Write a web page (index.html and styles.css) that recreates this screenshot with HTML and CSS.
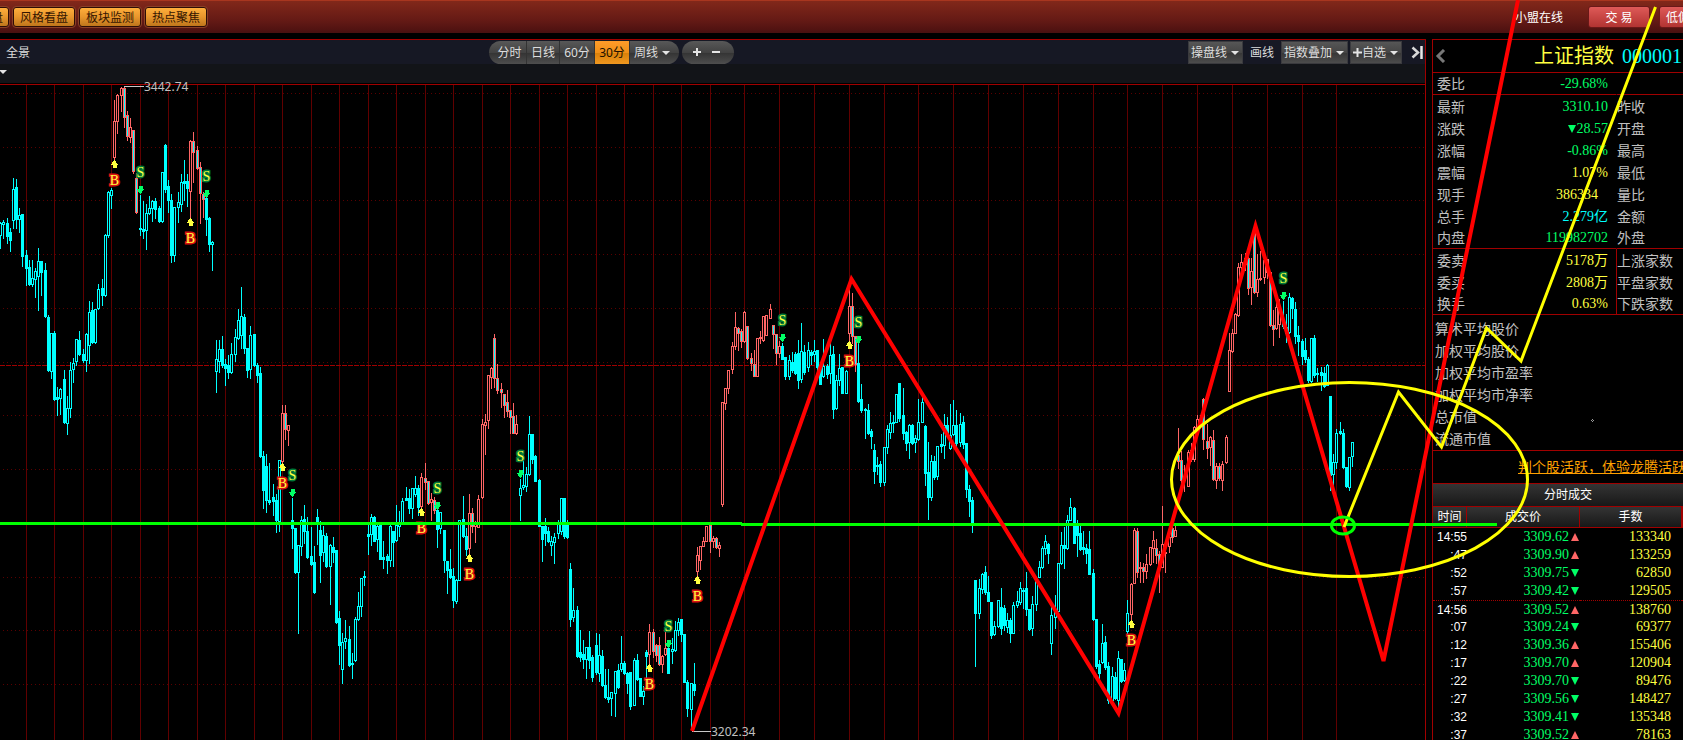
FILE: index.html
```html
<!DOCTYPE html>
<html lang="zh-CN">
<head>
<meta charset="utf-8">
<title>上证指数 000001</title>
<link rel="stylesheet" href="styles.css">
</head>
<body>
<header class="topbar">
  <nav class="topnav">
    <button class="gold gold-cut">盘</button>
    <button class="gold">风格看盘</button>
    <button class="gold">板块监测</button>
    <button class="gold">热点聚焦</button>
  </nav>
  <div class="topright">
    <a class="online" href="#">小盟在线</a>
    <button class="trade">交 易</button>
    <button class="trade">低佣开户</button>
  </div>
</header>
<main class="workspace">
  <section class="chart-panel">
    <div class="toolbar">
      <button class="plain panorama">全景</button>
      <div class="pill periods">
        <button class="seg">分时</button>
        <button class="seg">日线</button>
        <button class="seg">60分</button>
        <button class="seg active">30分</button>
        <button class="seg last">周线<span class="caret"></span></button>
      </div>
      <div class="pill zoomers">
        <button class="seg zoom" aria-label="放大"><svg width="10" height="10"><path d="M5 1V9M1 5H9" stroke="#e4e4e4" stroke-width="2"/></svg></button>
        <button class="seg zoom" aria-label="缩小"><svg width="10" height="10"><path d="M1 5H9" stroke="#e4e4e4" stroke-width="2"/></svg></button>
      </div>
      <div class="tools">
        <button class="tool">操盘线<span class="caret"></span></button>
        <button class="plain draw">画线</button>
        <button class="tool">指数叠加<span class="caret"></span></button>
        <button class="tool"><svg width="9" height="9"><path d="M4.500 0V9M0 4.500H9" stroke="#e4e4e4" stroke-width="2"/></svg>自选<span class="caret"></span></button>
        <button class="plain collapse" aria-label="收起"><svg width="13" height="13"><path d="M1.500 1.500L7 6.500L1.500 11.500" fill="none" stroke="#d8d8d8" stroke-width="2.500"/><path d="M10.500 0V13" stroke="#e8e8e8" stroke-width="2.500"/></svg></button>
      </div>
    </div>
    <div class="subbar"><span class="caret"></span></div>
    <div class="chart"><svg id="chart" width="1425" height="656" viewBox="0 84 1425 656"></svg></div>
  </section>
  <aside class="quote-panel">
    <div class="quote-head">
      <button class="plain back" aria-label="返回"><svg width="11" height="14"><path d="M9 1L3 7L9 13" fill="none" stroke="#777" stroke-width="3"/></svg></button>
      <h1 class="name">上证指数</h1><span class="code">000001</span>
    </div>
    <table class="quote">
      <tbody>
        <tr class="end"><th>委比</th><td class="green">-29.68%</td><th></th></tr>
        <tr><th>最新</th><td class="green">3310.10</td><th>昨收</th></tr>
        <tr><th>涨跌</th><td class="green"><i class="down"></i>28.57</td><th>开盘</th></tr>
        <tr><th>涨幅</th><td class="green">-0.86%</td><th>最高</th></tr>
        <tr><th>震幅</th><td class="yellow">1.07%</td><th>最低</th></tr>
        <tr><th>现手</th><td class="yellow shifted">386334</td><th>量比</th></tr>
        <tr><th>总手</th><td class="cyan">2.279亿</td><th>金额</th></tr>
        <tr class="end"><th>内盘</th><td class="green">119982702</td><th>外盘</th></tr>
        <tr class="split"><th>委卖</th><td class="yellow">5178万</td><th>上涨家数</th></tr>
        <tr class="split"><th>委买</th><td class="yellow">2808万</td><th>平盘家数</th></tr>
        <tr class="split end"><th>换手</th><td class="yellow">0.63%</td><th>下跌家数</th></tr>
      </tbody>
    </table>
    <ul class="averages">
      <li>算术平均股价</li><li>加权平均股价</li><li>加权平均市盈率</li><li>加权平均市净率</li><li>总市值</li><li>流通市值</li>
    </ul>
    <div class="notice"><a href="#">判个股活跃，体验龙腾活跃股</a></div>
    <h2 class="deals-title">分时成交</h2>
    <table class="deals">
      <thead><tr><th class="c-time">时间</th><th class="c-price">成交价</th><th class="c-vol">手数</th><th></th></tr></thead>
      <tbody>
        <tr><td>14:55</td><td>3309.62<i class="up"></i></td><td>133340</td><td></td></tr>
        <tr><td>:47</td><td>3309.90<i class="up"></i></td><td>133259</td><td></td></tr>
        <tr><td>:52</td><td>3309.75<i class="down"></i></td><td>62850</td><td></td></tr>
        <tr><td>:57</td><td>3309.42<i class="down"></i></td><td>129505</td><td></td></tr>
        <tr class="minute"><td>14:56</td><td>3309.52<i class="up"></i></td><td>138760</td><td></td></tr>
        <tr><td>:07</td><td>3309.24<i class="down"></i></td><td>69377</td><td></td></tr>
        <tr><td>:12</td><td>3309.36<i class="up"></i></td><td>155406</td><td></td></tr>
        <tr><td>:17</td><td>3309.70<i class="up"></i></td><td>120904</td><td></td></tr>
        <tr><td>:22</td><td>3309.70<i class="down"></i></td><td>89476</td><td></td></tr>
        <tr><td>:27</td><td>3309.56<i class="down"></i></td><td>148427</td><td></td></tr>
        <tr><td>:32</td><td>3309.41<i class="down"></i></td><td>135348</td><td></td></tr>
        <tr><td>:37</td><td>3309.52<i class="up"></i></td><td>78163</td><td></td></tr>
      </tbody>
    </table>
  </aside>
</main>
<svg class="drawing" aria-hidden="true">
  <path class="green-line" d="M0 523.500H742M741 524.500H1497"/>
  <path class="red-line" d="M692 731L851.500 279L1118.500 713L1255.500 226L1383.500 661L1518 0"/>
  <ellipse class="yellow-line" cx="1349.500" cy="479.500" rx="178" ry="97"/>
  <path class="yellow-line" d="M1344 527L1398.500 392L1441.500 447L1486.500 328L1521 361L1655.500 7"/>
  <ellipse class="green-line" cx="1343" cy="525.500" rx="11.500" ry="8.500"/>
  <path d="M1592.500 419.500l1 1l-1 1l-1 -1z" fill="none" stroke="#ccc"/>
</svg>
<script src="chart.js"></script>
</body>
</html>
```
FILE: styles.css
```css
* { box-sizing: border-box; }
body {
  margin: 0;
  height: 100vh;
  overflow: hidden;
  display: flex;
  flex-direction: column;
  position: relative;
  background: #000;
  color: #ddd;
  font: 12px/16px "Noto Sans", "Noto Sans CJK SC", sans-serif;
}
button {
  font: inherit;
  color: inherit;
  margin: 0;
  padding: 0;
  border: 0;
  background: none;
  white-space: nowrap;
}
svg { display: block; flex: none; }

.topbar {
  flex: none;
  height: 33px;
  display: flex;
  justify-content: space-between;
  overflow: hidden;
  border-top: 1px solid #a8361f;
  background: linear-gradient(#82281a, #651a15 60%, #4a1010);
}
.topnav { display: flex; gap: 4px; padding-top: 6px; margin-left: -53px; }
.gold {
  width: 62px;
  height: 20px;
  padding-top: 1px;
  border: 1px solid #2e0d06;
  border-radius: 3px;
  outline: 1px solid #8a4026;
  background: linear-gradient(#ffae3c, #e8962c 50%, #bf761c);
  color: #351500;
  line-height: 17px;
}
.gold-cut { text-align: right; padding-right: 5px; }
.topright { display: flex; gap: 9px; padding-top: 5px; width: 168px; }
.online { flex: none; width: 64px; line-height: 24px; color: #fff; text-decoration: none; }
.trade {
  flex: none;
  width: 62px;
  height: 22px;
  padding-top: 1px;
  border: 1px solid #6a1818;
  border-radius: 3px;
  background: linear-gradient(#de5a58, #c84644 50%, #b23432);
  color: #fff;
}

.workspace { flex: 1; min-height: 0; display: flex; gap: 6px; margin-top: 6px; }
.chart-panel {
  flex: 1;
  min-width: 0;
  display: flex;
  flex-direction: column;
  border-top: 1px solid #a00000;
  border-right: 1px solid #a00000;
}
.toolbar {
  flex: none;
  height: 24px;
  display: flex;
  align-items: center;
  background: #161824;
}
.panorama { width: 489px; padding: 2px 0 0 6px; text-align: left; }
.pill {
  display: flex;
  height: 23px;
  margin-right: 3px;
  border-radius: 12px;
  overflow: hidden;
  background: linear-gradient(#585858, #424242 50%, #333 51%, #4e4e4e);
}
.seg { width: 33px; padding-top: 1px; border-right: 1px solid #333; }
.seg:first-child { width: 38px; padding-left: 4px; }
.seg:nth-child(3) { width: 35px; }
.seg.active { width: 35px; background: linear-gradient(#ff9c2a, #f09018 50%, #d87f08 51%, #f09820); color: #201000; }
.seg.last { width: 49px; border: 0; text-align: left; padding-left: 4px; }
.zoomers { width: 52px; padding: 0 9px; }
.seg.zoom, .seg.zoom:first-child {
  display: flex;
  width: 17px;
  padding: 6px 0 0 1px;
  border: 0;
}
.seg.zoom + .zoom { margin-left: 4px; }
.caret {
  display: inline-block;
  border: 4px solid transparent;
  border-top-color: #e4e4e4;
  border-bottom: 0;
  margin-left: 4px;
  vertical-align: 2px;
}
.tools { margin-left: auto; display: flex; align-items: center; gap: 2px; }
.tool {
  display: flex;
  align-items: center;
  height: 23px;
  padding: 1px 3px 0 2px;
  border: 1px solid #3a3a3e;
  background: linear-gradient(#565656, #454545 50%, #363636 51%, #4c4c4c);
}
.draw { width: 34px; padding-top: 1px; }
.collapse { width: 21px; padding-left: 7px; }
.subbar {
  flex: none;
  height: 20px;
  border-bottom: 1px solid #000;
  background: #121418;
  overflow: hidden;
}
.subbar .caret { margin-left: -1px; }
.chart { flex: 1; min-height: 0; }
#chart { overflow: visible; shape-rendering: crispEdges; }

.frame { stroke: #a00000; }
.vgrid { stroke: #600000; }
.hgrid { stroke: #5a0000; stroke-dasharray: 1 3; }
.mid { stroke: #a00000; stroke-dasharray: 5 1; }
.cy { stroke: #00ffff; }
.rd { stroke: #ff6666; }
.box { fill: #000; }
.solid { fill: #00ffff; }
.mark { font: 14px "Liberation Serif", serif; text-anchor: middle; fill: #ffff40; paint-order: stroke; stroke-width: 3px; }
.buy { stroke: #d81010; }
.sell { stroke: #007838; }
.tip { fill: #c0c0c0; }
.tip-line { stroke: #c8c8c8; }

.drawing { position: absolute; inset: 0; width: 100%; height: 100%; pointer-events: none; }
.green-line, .yellow-line { fill: none; stroke-width: 3px; }
.green-line { stroke: #00ff00; }
.red-line { fill: none; stroke: #ff0000; stroke-width: 4px; }
.yellow-line { stroke: #ffff00; }

.quote-panel {
  flex: none;
  width: 251px;
  overflow: hidden;
  border-top: 1px solid #a00000;
  border-left: 1px solid #a00000;
  color: #c0c0c0;
  font-size: 14px;
}
.quote-head {
  display: flex;
  align-items: center;
  height: 33px;
  border-bottom: 1px solid #a00000;
  white-space: nowrap;
}
.back { width: 101px; padding-left: 2px; }
.name { margin: 0; font-size: 20px; line-height: 32px; font-weight: 400; color: #ffff40; }
.code { margin-left: 8px; font: 20px/32px "Liberation Serif", serif; color: #00ffff; }
table { width: 100%; border-spacing: 0; table-layout: fixed; }
th { font-weight: 400; text-align: left; white-space: nowrap; }
td { text-align: right; font-family: "Liberation Serif", "Noto Sans CJK SC", serif; }
.quote th, .quote td { height: 22px; padding: 1px 0 0; line-height: 20px; }
.quote th:first-child { width: 60px; padding-left: 4px; }
.quote td { width: 123px; padding-right: 8px; }
.quote .shifted { padding-right: 18px; }
.end th, .end td, .end th:first-child { border-bottom: 1px solid #a00000; }
.quote th:last-child { border-left: 1px solid transparent; }
.split th:last-child { border-left-color: #a00000; }
.green { color: #00ff66; }
.yellow { color: #ffff40; }
.cyan { color: #00ffff; }
.up, .down {
  display: inline-block;
  border: 4px solid transparent;
  border-top: 0;
  border-bottom: 8px solid #ff6666;
  margin: 0 1px 0 2px;
}
.down { border-top: 8px solid #00ff66; border-bottom: 0; }

.averages {
  margin: 0;
  padding: 3px 0 0 2px;
  list-style: none;
  line-height: 22px;
  height: 136px;
  border-bottom: 1px solid #a00000;
}
.notice { height: 33px; padding-left: 85px; line-height: 32px; border-bottom: 1px solid #a00000; white-space: nowrap; }
.notice a { color: #ffa000; }
.deals-title {
  margin: 0;
  height: 23px;
  border-bottom: 1px solid #a00000;
  background: linear-gradient(#343434, #181818);
  color: #fff;
  font-size: 12px;
  line-height: 22px;
  font-weight: 400;
  text-align: center;
  padding-left: 20px;
}
.deals th {
  height: 21px;
  padding: 0;
  border-right: 1px solid #a00000;
  border-bottom: 1px solid #a00000;
  background: linear-gradient(#343434, #181818);
  color: #fff;
  font-size: 12px;
  text-align: center;
}
.c-time { width: 34px; }
.c-price { width: 113px; }
.c-vol { width: 102px; }
.deals td { height: 18px; padding: 0; line-height: 16px; color: #00ff66; }
.deals td:first-child { color: #fff; font: 12px/16px "Liberation Sans", sans-serif; }
.deals td:nth-child(3) { color: #ffff40; padding-right: 11px; }
.minute td { border-top: 1px dotted #a00000; }
```
FILE: chart.js
```js
// One candle per entry: x high top bottom low kind
// kinds: f falling, h rising, r rising in a buy span, m falling in a buy span
const candles = `
0 222 223 235 248 h,3 220 222 224 238 h,7 218 223 236 243 f,10 228 232 240 251 f,13 178 189 220 228 h,16 179 187 219 228 f,19 208 215 219 232 h,22 214 214 256 266 f,26 250 255 268 285 f,29 260 267 284 285 f,32 260 278 284 286 h,35 268 271 279 297 h,38 248 261 276 310 h,41 261 261 272 295 f,45 263 270 316 317 f,48 315 317 370 371 f,51 333 333 371 378 h,54 331 333 399 400 f,57 387 397 399 415 f,60 388 389 398 414 h,64 370 379 422 423 f,67 396 408 423 434 h,70 362 370 408 417 h,73 358 363 369 382 h,76 339 339 361 365 h,79 331 340 354 355 f,83 349 354 360 362 f,86 333 334 360 371 h,89 301 312 345 363 h,92 302 310 342 343 f,95 309 309 342 343 h,98 284 289 308 309 h,102 279 288 295 305 f,105 234 235 295 296 h,108 191 192 235 237 h,111 188 190 195 208 h,
114 100 121 157 160 r,117 94 95 121 133 r,121 87 88 95 111 r,124 87 88 117 127 m,127 111 115 136 140 m,130 118 127 137 142 r,133 130 130 171 173 m,136 173 178 212 213 m,140 195 228 229 235 f,143 201 229 231 238 f,146 204 213 230 249 h,149 196 208 213 214 h,152 200 201 208 221 h,155 198 201 209 218 f,159 206 208 221 222 f,162 172 172 221 222 h,165 144 145 189 192 f,168 180 186 200 212 f,171 194 200 255 262 f,174 207 207 255 261 h,178 192 202 207 222 h,181 174 182 204 211 h,184 160 181 183 200 f,187 174 181 188 206 f,190 140 141 191 218 r,193 132 141 152 182 m,197 146 150 168 169 m,200 162 167 193 223 m,203 192 194 199 217 m,206 197 198 219 235 f,209 217 218 244 251 f,212 241 242 244 270 h,
216 340 359 371 392 h,219 340 349 361 372 h,222 336 349 365 367 f,225 359 364 368 385 f,228 355 365 372 378 f,231 343 354 372 373 h,235 329 337 354 361 h,238 309 320 338 339 h,241 287 316 335 348 h,244 314 317 348 353 f,247 348 348 370 377 f,250 326 335 369 378 h,254 334 334 365 366 f,257 363 365 375 382 f,260 367 373 456 457 f,263 451 456 490 508 f,266 454 466 500 512 f,269 463 500 502 504 f,273 484 497 501 515 f,276 494 500 520 532 f,279 460 460 521 531 h,282 405 413 461 463 r,285 405 413 429 439 m,288 425 425 430 445 r,292 498 520 528 548 f,295 528 528 572 573 f,298 545 545 572 633 h,301 516 520 546 555 h,304 505 519 531 543 f,307 517 531 557 558 f,311 527 556 564 565 f,314 546 562 592 593 f,317 509 517 523 544 f,320 521 530 555 582 f,323 526 535 552 561 h,326 533 536 566 567 f,330 544 545 566 604 h,333 537 547 552 562 f,336 550 550 622 623 f,339 611 618 645 664 f,342 633 642 669 683 h,345 620 638 641 648 h,349 626 639 665 666 f,352 653 663 664 678 f,355 617 619 660 661 h,358 592 606 619 620 h,361 578 578 606 616 h,364 571 576 577 585 f,
368 525 534 536 554 f,371 514 517 534 545 h,374 516 517 541 541 f,377 524 526 539 551 h,380 523 524 559 559 f,383 541 557 559 568 f,387 554 556 560 573 f,390 525 526 560 566 h,393 531 531 542 566 f,396 505 525 540 541 h,399 511 522 526 536 h,402 498 501 522 523 h,406 487 498 500 500 f,409 489 498 508 513 f,412 488 488 508 518 h,415 476 488 494 496 h,418 485 488 507 515 f,421 473 477 506 508 r,425 463 478 482 489 m,428 481 481 503 504 m,431 493 499 502 520 r,434 497 500 510 513 m,437 506 510 529 547 f,440 512 512 528 533 h,444 530 530 560 572 f,447 561 561 570 593 f,450 549 569 577 578 f,453 568 576 600 607 f,456 579 580 601 603 h,459 520 520 580 580 h,463 496 519 536 537 f,466 528 536 549 555 f,469 494 513 548 554 r,472 508 513 526 532 m,475 521 524 526 542 r,478 495 499 527 527 r,482 419 424 497 498 r,485 414 422 425 454 r,488 375 375 420 428 r,491 367 368 377 388 r,494 334 338 378 387 m,497 364 378 390 393 m,501 383 389 392 407 m,504 394 394 405 417 m,507 390 402 411 416 m,510 410 410 417 433 m,513 403 416 433 433 m,516 415 424 433 434 r,
520 479 488 495 520 h,523 455 485 487 489 h,526 467 474 486 491 h,529 416 434 474 475 h,532 434 434 459 463 f,535 455 456 481 481 f,539 479 480 526 526 f,542 526 526 539 561 f,545 518 526 533 545 f,548 527 531 541 542 f,551 536 541 545 555 h,554 533 537 542 563 h,558 520 522 533 538 h,561 498 498 531 534 h,564 498 498 536 538 f,567 520 525 537 538 f,570 563 569 619 626 f,573 588 610 617 621 h,577 606 610 656 657 f,580 630 652 657 661 f,583 640 654 659 668 f,586 647 647 659 678 h,589 631 647 660 668 f,592 655 657 677 681 f,596 633 645 672 674 f,599 634 655 673 681 h,602 650 656 685 686 f,605 669 685 697 698 f,608 669 697 699 702 f,611 692 692 698 715 h,615 671 671 693 716 h,618 664 670 687 688 f,621 636 663 669 671 h,624 661 663 673 674 f,627 672 673 683 693 f,630 672 672 706 709 f,634 658 660 705 705 h,637 654 660 679 680 f,640 678 678 696 696 f,643 686 691 696 704 h,646 650 652 656 680 f,649 624 632 654 664 r,653 629 632 651 657 m,656 644 645 655 661 m,659 637 645 664 665 m,662 655 656 664 672 r,665 630 648 654 655 r,668 648 648 673 673 f,672 638 649 651 663 h,675 621 630 650 651 h,678 618 622 630 635 h,681 619 619 634 641 f,684 634 634 682 682 f,687 680 682 708 716 f,691 683 683 709 727 h,694 663 684 690 695 f,
697 547 555 571 576 r,700 546 546 560 569 r,703 537 541 546 546 r,706 526 526 541 541 r,710 522 525 541 552 m,713 536 538 541 547 r,716 537 538 547 548 m,719 542 545 548 556 r,722 402 402 504 506 r,725 388 388 403 409 r,728 370 370 388 393 r,732 342 346 369 373 r,735 312 327 346 349 r,738 327 328 333 350 m,741 329 331 341 347 m,744 311 312 341 342 r,747 326 326 358 359 m,751 353 358 363 370 m,754 350 364 376 376 m,757 338 338 376 376 r,760 331 337 338 343 r,763 316 316 340 341 r,766 315 315 335 335 r,770 304 309 318 318 r,773 325 325 334 348 m,776 334 334 353 364 m,779 341 346 353 357 r,782 343 346 359 359 f,785 357 357 376 379 f,789 355 360 376 379 h,792 352 362 370 372 f,795 352 354 373 374 f,798 340 353 380 388 f,801 323 351 379 382 h,804 345 352 372 374 f,808 342 350 367 371 h,811 350 352 355 364 f,814 340 351 354 361 h,817 350 350 367 376 f,820 365 367 384 384 f,823 339 366 376 377 h,827 364 366 374 378 f,830 343 355 373 383 h,833 346 354 409 418 f,836 375 380 408 409 h,839 354 368 380 385 h,842 367 367 393 393 f,846 370 371 393 393 h,849 288 306 333 341 r,852 293 306 336 343 m,855 336 336 364 371 m,
858 344 363 401 402 f,861 384 399 410 412 f,865 408 409 410 438 f,868 404 410 433 434 f,871 429 431 436 448 f,874 444 450 471 483 f,877 457 465 466 474 f,880 461 464 482 486 f,884 447 447 482 485 h,887 425 429 447 453 h,890 412 423 432 438 h,893 415 422 423 432 h,896 394 394 422 422 h,899 383 383 418 421 f,903 388 415 433 439 f,906 431 432 443 450 f,909 424 425 442 458 h,912 424 425 443 444 f,915 435 438 442 452 h,918 399 422 439 440 h,922 395 402 422 422 h,925 425 426 473 485 f,928 442 472 497 519 f,931 455 461 497 500 h,934 456 461 477 479 f,937 446 446 476 479 h,941 434 444 446 452 f,944 414 425 445 458 h,947 417 425 434 436 f,950 404 435 448 449 h,953 400 425 434 435 h,956 410 425 443 447 f,960 413 424 442 446 h,963 416 422 444 448 f,966 443 443 489 497 f,969 485 489 501 516 f,972 497 500 525 532 f,975 580 580 613 666 f,979 579 588 613 618 h,982 573 574 589 593 h,985 566 572 592 594 f,988 576 592 601 601 f,991 602 602 635 638 f,994 621 626 634 635 h,998 600 600 626 627 h,1001 588 607 628 634 f,1004 605 608 625 630 f,1007 613 620 627 632 h,1010 618 620 633 642 f,1013 602 605 633 633 h,1017 591 601 605 607 h,1020 582 588 602 604 h,1023 588 590 591 608 f,1026 572 588 609 615 f,1029 609 609 629 630 f,1032 596 604 628 635 h,1036 579 580 604 610 h,1039 561 567 577 577 h,1042 546 548 567 568 h,1045 535 541 548 554 h,1048 543 544 553 563 f,
1051 607 615 643 654 h,1055 595 612 617 628 h,1058 563 563 611 612 h,1061 532 545 563 564 h,1064 527 545 548 568 f,1067 515 520 548 549 h,1070 498 507 520 520 h,1074 507 508 543 543 f,1077 520 525 535 556 f,1080 526 533 549 550 f,1083 531 547 549 554 f,1086 544 548 553 563 f,1089 531 549 574 574 f,1093 569 573 619 620 f,1096 619 619 666 668 f,1099 660 664 673 680 f,1102 624 643 662 663 h,1105 636 642 667 669 f,1108 662 666 700 703 f,1112 667 676 700 700 h,1115 672 677 698 699 f,1118 651 658 700 709 h,1121 659 659 681 682 f,1124 663 670 680 681 h,1127 600 613 631 635 h,1131 583 584 614 620 r,1134 528 530 583 583 r,1137 528 531 572 577 m,1140 562 567 568 582 m,1143 563 567 571 582 m,1146 554 564 571 578 r,1150 547 547 564 565 r,1153 531 540 548 562 r,1156 539 548 555 563 m,1159 551 554 565 592 m,1162 506 544 567 567 r,1165 543 552 553 572 r,1169 536 537 546 552 r,1172 527 528 537 542 m,1175 526 530 536 536 r,
1178 428 455 461 468 m,1181 451 460 480 484 m,1184 465 478 480 491 r,1188 450 452 486 486 r,1191 443 450 459 461 r,1194 426 427 459 461 r,1197 415 419 430 431 r,1200 415 419 424 426 r,1203 398 399 439 449 m,1207 424 441 448 458 m,1210 436 437 447 465 r,1213 430 440 479 480 m,1216 463 466 480 488 r,1219 463 466 478 480 m,1222 461 464 480 490 r,1226 435 437 462 463 r,1229 333 350 391 391 r,1232 329 333 351 352 r,1235 313 314 333 333 r,1238 263 267 315 316 r,1241 254 262 267 270 r,1245 253 258 264 270 r,1248 257 258 288 294 m,1251 258 271 287 304 r,1254 230 233 292 293 m,1257 254 279 292 296 r,1260 251 278 279 280 r,1264 259 260 277 283 r,1267 259 259 272 278 m,1270 272 272 325 326 m,1273 310 325 329 345 m,1276 299 307 328 329 r,1279 299 307 324 337 r,1283 301 321 326 328 f,1286 314 327 333 342 f,1289 293 297 332 333 h,1292 297 298 308 318 f,1295 302 309 336 343 f,1298 326 335 341 355 f,1302 339 341 356 364 f,1305 338 350 359 362 f,1308 357 359 380 382 f,1311 338 338 381 382 h,1314 335 338 375 377 f,1317 368 373 374 381 f,1321 367 372 375 390 f,1324 367 373 386 387 f,1327 364 365 385 385 h,1330 396 396 475 490 f,1333 454 462 474 487 h,1336 429 433 462 468 h,1340 422 431 433 434 f,1343 429 433 467 468 f,1346 467 467 486 487 f,1349 457 457 487 490 h,1352 442 442 456 466 h`;

// x, arrow centre y, letter
const signals = [[114,164,'B'],[140,190,'S'],[190,222,'B'],[206,194,'S'],[282,467,'B'],[292,493,'S'],[421,512,'B'],[437,506,'S'],[469,558,'B'],[520,474,'S'],[649,668,'B'],[668,644,'S'],[697,580,'B'],[782,338,'S'],[849,345,'B'],[858,340,'S'],[1131,624,'B'],[1283,296,'S']];

const columns = [26,54,83,111,140,168,197,225,254,282,311,339,368,396,425,453,482,510,539,567,596,624,653,681,710,744,779,814,849,884,918,953,988,1023,1058,1093,1127,1162,1197,1232,1267,1302,1336];
const rows = [93,147,200,254,308,362,415,469,523,577,630,684];

let out = '';
for (const x of columns) out += `<path class="vgrid" d="M${x + .5} 85V740"/>`;
for (const y of rows) out += `<path class="hgrid" d="M3 ${y + .5}H1425"/>`;
out += '<path class="frame" d="M0 84.5H1425"/><path class="mid" d="M0 365.5H1425"/>';

for (const item of candles.split(',')) {
  const part = item.trim().split(' ');
  const [x, high, top, bottom, low] = part.slice(0, 5).map(Number);
  const kind = part[5];
  const tone = kind === 'r' || kind === 'm' ? 'rd' : 'cy';
  const fill = kind === 'f' || kind === 'm' ? 'solid' : 'box';
  out += `<path class="${tone}" d="M${x + .5} ${high}V${low + 1}"/>`;
  out += `<rect class="${tone} ${fill}" x="${x - .5}" y="${top + .5}" width="2" height="${Math.max(bottom - top, 1)}"/>`;
}

for (const [x, y, letter] of signals) {
  const buy = letter === 'B';
  const s = buy ? 1 : -1;
  const cx = x + .5;
  out += `<path fill="${buy ? '#ffff40' : '#00ff66'}" d="M${cx} ${y - 4 * s}L${cx + 4} ${y + s}H${cx + 2}V${y + 4 * s}H${cx - 2}V${y + s}H${cx - 4}Z"/>`;
  out += `<text class="mark ${buy ? 'buy' : 'sell'}" x="${cx}" y="${y + 17 * s + 4}">${letter}</text>`;
}
out += '<path class="tip-line" d="M124 86.5H144M692 731.5H711"/>';
out += '<text class="tip" x="144" y="91">3442.74</text><text class="tip" x="711" y="736">3202.34</text>';
document.getElementById('chart').innerHTML = out;
```
